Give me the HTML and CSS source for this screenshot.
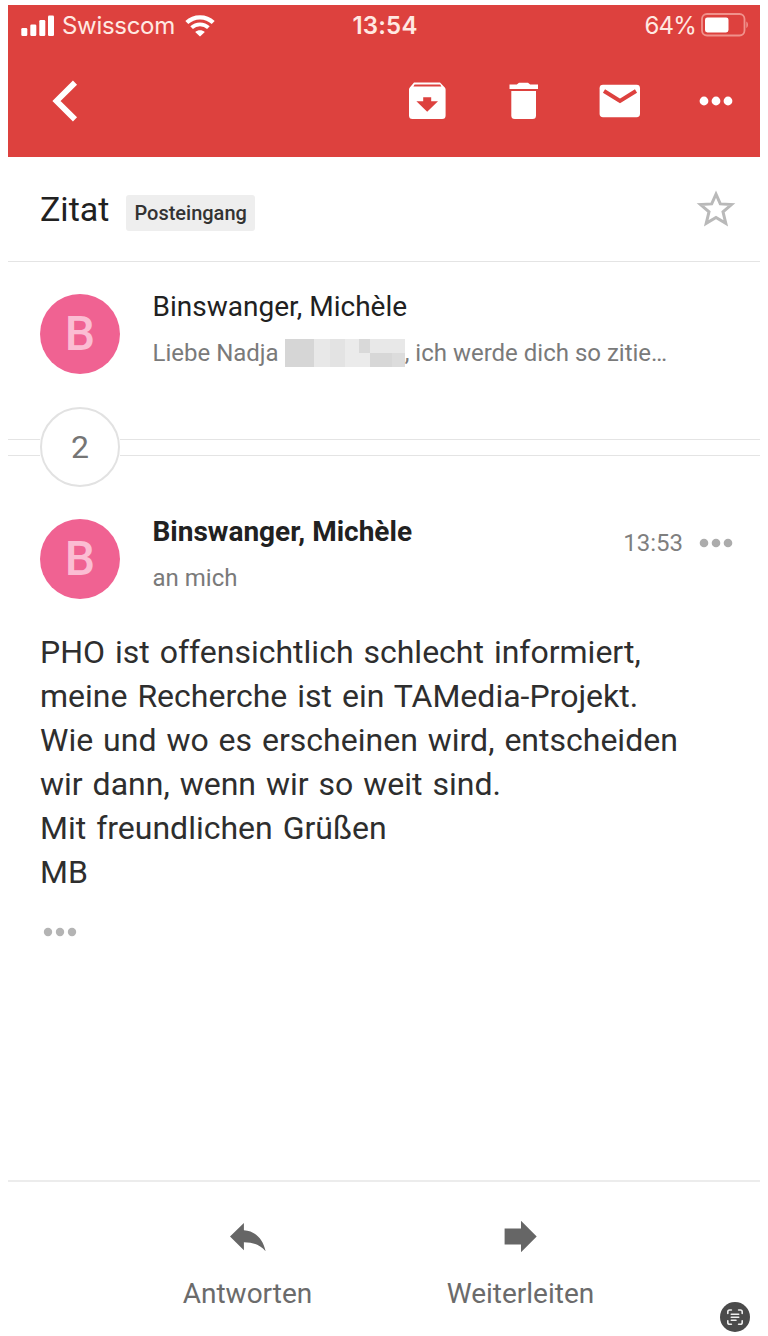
FILE: index.html
```
<!DOCTYPE html>
<html lang="de">
<head>
  <meta charset="UTF-8" />
  <meta name="viewport" content="width=device-width, initial-scale=1" />
  <title>Zitat</title>
  <link rel="stylesheet" href="styles.css">
</head>
<body>

  <div class="app">
    <header class="header">
      <div class="status">
        <div class="statusLeft">
          <svg class="signal" width="34" height="22" viewBox="0 0 34 22" fill="#fff">
            <rect x="0.3" y="13" width="6" height="8" rx="1.3" />
            <rect x="9.3" y="9.5" width="6" height="11.5" rx="1.3" />
            <rect x="18.3" y="5" width="6" height="16" rx="1.3" />
            <rect x="27" y="0.5" width="6" height="20.5" rx="1.3" />
          </svg>
          <span class="carrier">Swisscom</span>
          <svg class="wifi" width="30" height="22" viewBox="0 0 30 22">
            <path d="M1.8 7.6C9 .5 21 .5 28.2 7.6" fill="none" stroke="#fff" stroke-width="4.2" />
            <path d="M6.6 12.6C11.2 8.2 18.8 8.2 23.4 12.6" fill="none" stroke="#fff" stroke-width="3.8" />
            <path d="M10.2 17C12.8 14.6 17.2 14.6 19.8 17L15 21.6Z" fill="#fff" />
          </svg>
        </div>
        <span class="clock">13:54</span>
        <div class="statusRight">
          <span class="percent">64%</span>
          <svg class="battery" width="48" height="24" viewBox="0 0 48 24">
            <rect x="1" y="1" width="42.5" height="21.5" rx="5" fill="none" stroke="#f0928c" stroke-width="1.8" />
            <rect x="4" y="4.4" width="23.5" height="15" rx="2.4" fill="#fff" />
            <path d="M45.3 8.5c2.2 1 2.2 5.6 0 6.6z" fill="#f0928c" />
          </svg>
        </div>
      </div>

      <nav class="toolbar">
        <svg class="back" width="48" height="48" viewBox="0 0 48 48">
          <path d="M35 5.6L16.5 24L35 42.4" fill="none" stroke="#fff" stroke-width="5.8" />
        </svg>
        <svg width="48" height="48" viewBox="0 0 48 48">
          <path fill="#fff" fill-rule="evenodd" d="M10 5.6H36L40.8 10.4Q41.6 11.2 41.6 12.4V38.5Q41.6 42 38.1 42H8.5Q5 42 5 38.5V12.4Q5 11.2 5.8 10.4ZM10.6 7.4L9.4 9.4H37.4L36.2 7.4ZM19.2 20.2V24.3H12.4L23.2 34.8L34 24.3H27.2V20.2Z" />
        </svg>
        <svg width="48" height="48" viewBox="0 0 48 48" fill="#fff">
          <path d="M9.5 7.6H16.8L19 5.8H28L30.2 7.6H38V12H9.5Z" />
          <path d="M11.3 13.9H36V38.5Q36 42 32.5 42H14.8Q11.3 42 11.3 38.5Z" />
        </svg>
        <svg width="48" height="48" viewBox="0 0 48 48">
          <rect x="3.6" y="7.8" width="40.4" height="32.4" rx="3.4" fill="#fff" />
          <path d="M8 14L24 24L40 14" fill="none" stroke="#dd413e" stroke-width="4" />
        </svg>
        <svg width="48" height="48" viewBox="0 0 48 48" fill="#fff">
          <circle cx="12" cy="24" r="4.4" />
          <circle cx="24" cy="24" r="4.4" />
          <circle cx="36" cy="24" r="4.4" />
        </svg>
      </nav>
    </header>

    <section class="subject">
      <h1 class="subjectTitle">Zitat</h1>
      <span class="label">Posteingang</span>
      <svg class="star" width="48" height="48" viewBox="0 0 48 48">
        <path d="M24 9.2L28.3 18.9L39.5 19.6L31 26.8L33.8 38.4L24 32.5L14.2 38.4L17 26.8L8.5 19.6L19.7 18.9Z" fill="none" stroke="#b9b9b9" stroke-width="3" />
      </svg>
    </section>

    <section class="message">
      <div class="avatar">B</div>
      <div class="messageInfo">
        <div class="sender">Binswanger, Michèle</div>
        <div class="preview">
          <span>Liebe Nadja</span>
          <svg class="redacted" width="120" height="28" viewBox="0 0 120 28" shape-rendering="crispEdges">
            <rect width="120" height="28" fill="#e8e8e8" />
            <rect width="29" height="28" fill="#d6d6d6" />
            <rect x="45" width="15" height="28" fill="#e3e3e3" />
            <rect x="60" width="25" height="28" fill="#ebebeb" />
            <rect x="74" width="11" height="14" fill="#d9d9d9" />
            <rect x="85" y="14" width="22" height="14" fill="#d7d7d7" />
            <rect x="107" y="14" width="13" height="14" fill="#dcdcdc" />
          </svg>
          <span class="previewRest">, ich werde dich so zitie…</span>
        </div>
      </div>
    </section>

    <div class="collapsed">
      <div class="collapsedLines"></div>
      <div class="collapsedCount">2</div>
      <div class="collapsedLines collapsedLong"></div>
    </div>

    <section class="message messageOpen">
      <div class="avatar">B</div>
      <div class="messageInfo">
        <div class="sender senderBold">Binswanger, Michèle</div>
        <div class="recipient">an mich</div>
      </div>
      <div class="messageMeta">
        <span class="time">13:53</span>
        <svg width="34" height="10" viewBox="0 0 34 10" fill="#acacac">
          <circle cx="5" cy="5" r="4.3" />
          <circle cx="17" cy="5" r="4.3" />
          <circle cx="29" cy="5" r="4.3" />
        </svg>
      </div>
    </section>

    <article class="text">
      <p>PHO ist offensichtlich schlecht informiert,</p>
      <p>meine Recherche ist ein TAMedia-Projekt.</p>
      <p>Wie und wo es erscheinen wird, entscheiden</p>
      <p>wir dann, wenn wir so weit sind.</p>
      <p>Mit freundlichen Grüßen</p>
      <p>MB</p>
      <svg class="more" width="34" height="10" viewBox="0 0 34 10" fill="#b4b4b4">
        <circle cx="5" cy="5" r="4.2" />
        <circle cx="17" cy="5" r="4.2" />
        <circle cx="29" cy="5" r="4.2" />
      </svg>
    </article>

    <footer class="actions">
      <div class="action">
        <svg width="40" height="34" viewBox="0 0 40 34">
          <path d="M2 16.5L15.9 3V10.2C27.5 11 35 19 37.6 31.2C32 25.2 25.5 22.2 15.9 22.2V30.3Z" fill="#666" />
        </svg>
        <span>Antworten</span>
      </div>
      <div class="action">
        <svg width="40" height="34" viewBox="0 0 40 34">
          <path d="M3.6 8.5H20V.8L35.7 16.5L20 32.2V24.5H3.6Z" fill="#666" />
        </svg>
        <span>Weiterleiten</span>
      </div>
      <div class="scan">
        <svg width="30" height="30" viewBox="0 0 30 30" fill="none" stroke="#eee" stroke-width="1.6" stroke-linecap="round">
          <path d="M7.8 11.4V9.8Q7.8 8 9.6 8H11.4M18.6 8H20.4Q22.2 8 22.2 9.8V11.4M22.2 18.8V20.4Q22.2 22.2 20.4 22.2H18.6M11.4 22.2H9.6Q7.8 22.2 7.8 20.4V18.8" />
          <path d="M11.3 12.2H18.7M11.3 15.2H18.7M11.3 18.2H16" />
        </svg>
      </div>
    </footer>
  </div>

</body>
</html>
```
FILE: styles.css
```
* {
  box-sizing: border-box;
}
body {
  margin: 0;
  background-color: #fff;
  color: #212121;
  font-family: Roboto, sans-serif;
}
svg {
  display: block;
  flex-shrink: 0;
}
.app {
  display: flex;
  flex-direction: column;
  width: 768px;
  height: 1336px;
  padding: 5px 8px 0;
  overflow: hidden;
}

/* Header */
.header {
  height: 152px;
  background-color: #dd413e;
}
.status {
  display: grid;
  grid-template-columns: 1fr auto 1fr;
  align-items: center;
  height: 40px;
  padding: 1px 11px 0 13px;
  color: #ffe9e2;
  font-family: Inter, sans-serif;
  font-size: 24px;
  line-height: 40px;
}
.statusLeft, .statusRight {
  display: flex;
  align-items: center;
}
.statusRight {
  justify-content: flex-end;
}
.carrier {
  margin: 0 10px 0 7px;
  letter-spacing: -0.3px;
}
.clock {
  font-weight: 600;
  letter-spacing: 0.2px;
}
.percent {
  margin-right: 5px;
  letter-spacing: -0.8px;
}
.battery {
  margin-top: -3px;
}
.toolbar {
  display: flex;
  align-items: center;
  gap: 48px;
  height: 112px;
  padding: 0 20px 0 32px;
}
.back {
  margin-right: auto;
}

/* Subject */
.subject {
  display: flex;
  align-items: center;
  height: 105px;
  padding: 0 20px 0 32px;
  border-bottom: 1px solid #e4e4e4;
}
.subjectTitle {
  margin: 0;
  font-size: 34px;
  font-weight: 400;
  line-height: 40px;
}
.label {
  margin: 8px 0 0 17px;
  padding: 0 8px;
  border-radius: 3px;
  background-color: #eee;
  color: #333;
  font-size: 20px;
  font-weight: 500;
  line-height: 36px;
}
.star {
  margin-left: auto;
}

/* Messages */
.message {
  display: flex;
  height: 145px;
  padding: 32px 27px 0 32px;
}
.avatar {
  width: 80px;
  height: 80px;
  border-radius: 50%;
  background-color: #f06292;
  color: #fbbdd3;
  font-size: 48px;
  font-weight: 500;
  line-height: 80px;
  text-align: center;
}
.messageInfo {
  margin-left: 32.5px;
}
.sender {
  margin-top: -4px;
  font-size: 28px;
  line-height: 34px;
}
.senderBold {
  font-weight: 700;
}
.preview, .recipient {
  display: flex;
  margin-top: 12px;
  color: #7a7a7a;
  font-size: 24px;
  line-height: 34px;
}
.redacted {
  margin: 3px 0 0 6px;
}
.collapsed {
  display: flex;
  align-items: center;
  height: 80px;
}
.collapsedLines {
  width: 32px;
  height: 17px;
  border: solid #e4e4e4;
  border-width: 1px 0;
}
.collapsedLong {
  flex: 1;
}
.collapsedCount {
  width: 80px;
  height: 80px;
  border: 2px solid #e2e2e2;
  border-radius: 50%;
  color: #757575;
  font-size: 32px;
  line-height: 76px;
  text-align: center;
}
.messageOpen {
  height: 143px;
}
.messageMeta {
  display: flex;
  align-items: center;
  gap: 16px;
  height: 48px;
  margin-left: auto;
  color: #7f7f7f;
  font-size: 24px;
}

/* Mail text */
.text {
  padding: 0 32px;
  color: #2e2e2e;
  font-size: 32px;
  line-height: 44px;
  white-space: nowrap;
  word-spacing: 2px;
}
.text p {
  width: max-content;
  margin: 0;
}
.more {
  margin: 33px 0 0 3px;
}

/* Bottom bar */
.actions {
  position: relative;
  display: flex;
  justify-content: center;
  height: 156px;
  margin-top: auto;
  border-top: 2px solid #ececec;
}
.action {
  display: flex;
  flex-direction: column;
  align-items: center;
  width: 273px;
  padding-top: 38px;
  color: #6b6b6b;
  font-size: 28px;
  line-height: 36px;
}
.action span {
  margin-top: 22px;
}
.scan {
  position: absolute;
  right: 10px;
  bottom: 4px;
  border-radius: 50%;
  background-color: #4a4a4a;
}
```
